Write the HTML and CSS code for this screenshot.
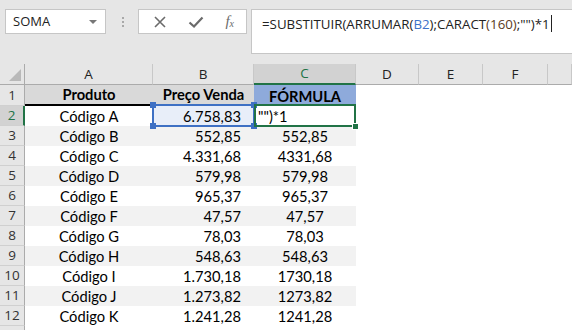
FILE: index.html
```html
<!DOCTYPE html>
<html>
<head>
  <meta charset="UTF-8">
  <title>Planilha – SUBSTITUIR</title>
  <link rel="stylesheet" href="styles.css">
</head>
<body>
  <!-- Formula bar -->
  <div class="formula-bar">
    <div class="name-box">SOMA<span class="drop"></span></div>
    <div class="grip"><i></i><i></i><i></i></div>
    <div class="fx-buttons">
      <svg width="14" height="14" viewBox="0 0 14 14"><path d="M2 2L12 12M12 2L2 12" stroke="#6b6b6b" stroke-width="1.6" fill="none"/></svg>
      <svg width="16" height="14" viewBox="0 0 16 14"><path d="M1.5 7.5L6 11.5L14.5 2.5" stroke="#6b6b6b" stroke-width="2.2" fill="none"/></svg>
      <span class="fx">f<sub>x</sub></span>
    </div>
    <div class="formula-input">=SUBSTITUIR(ARRUMAR(<span class="ref">B2</span>);CARACT<span class="par">(160)</span>;"")*1<span class="caret"></span></div>
  </div>

  <!-- Sheet -->
  <table class="sheet">
    <colgroup>
      <col style="width:25px"><col style="width:128px"><col style="width:101px"><col style="width:102px">
      <col style="width:63px"><col style="width:64px"><col style="width:65px"><col style="width:24px">
    </colgroup>
    <tr class="col-heads">
      <th class="corner"><span class="tri"></span></th><th>A</th><th>B</th><th class="on">C</th><th>D</th><th>E</th><th>F</th><th></th>
    </tr>
    <tr class="title-row">
      <th class="rh">1</th><td class="c">Produto</td><td class="c">Preço Venda</td><td class="c blue">FÓRMULA</td><td></td><td></td><td></td><td></td>
    </tr>
    <tr>
      <th class="rh on">2</th><td class="c">Código A</td><td class="r ref-cell">6.758,83</td><td class="active">"")*1</td><td></td><td></td><td></td><td></td>
    </tr>
    <tr class="alt">
      <th class="rh">3</th><td class="c">Código B</td><td class="r">552,85</td><td class="c">552,85</td><td></td><td></td><td></td><td></td>
    </tr>
    <tr>
      <th class="rh">4</th><td class="c">Código C</td><td class="r">4.331,68</td><td class="c">4331,68</td><td></td><td></td><td></td><td></td>
    </tr>
    <tr class="alt">
      <th class="rh">5</th><td class="c">Código D</td><td class="r">579,98</td><td class="c">579,98</td><td></td><td></td><td></td><td></td>
    </tr>
    <tr>
      <th class="rh">6</th><td class="c">Código E</td><td class="r">965,37</td><td class="c">965,37</td><td></td><td></td><td></td><td></td>
    </tr>
    <tr class="alt">
      <th class="rh">7</th><td class="c">Código F</td><td class="r">47,57</td><td class="c">47,57</td><td></td><td></td><td></td><td></td>
    </tr>
    <tr>
      <th class="rh">8</th><td class="c">Código G</td><td class="r">78,03</td><td class="c">78,03</td><td></td><td></td><td></td><td></td>
    </tr>
    <tr class="alt">
      <th class="rh">9</th><td class="c">Código H</td><td class="r">548,63</td><td class="c">548,63</td><td></td><td></td><td></td><td></td>
    </tr>
    <tr>
      <th class="rh">10</th><td class="c">Código I</td><td class="r">1.730,18</td><td class="c">1730,18</td><td></td><td></td><td></td><td></td>
    </tr>
    <tr class="alt">
      <th class="rh">11</th><td class="c">Código J</td><td class="r">1.273,82</td><td class="c">1273,82</td><td></td><td></td><td></td><td></td>
    </tr>
    <tr>
      <th class="rh">12</th><td class="c">Código K</td><td class="r">1.241,28</td><td class="c">1241,28</td><td></td><td></td><td></td><td></td>
    </tr>
    <tr>
      <th class="rh"></th><td></td><td></td><td></td><td></td><td></td><td></td><td></td>
    </tr>
  </table>
</body>
</html>
```

FILE: styles.css
```css
/* --- page --- */
body{margin:0;background:#fff;overflow:hidden;font-family:"Open Sans","Noto Sans",sans-serif;}

/* --- formula bar --- */
.formula-bar{display:flex;align-items:flex-start;height:64px;box-sizing:border-box;padding:9px 0 0 5px;background:#e6e6e6;}
.name-box{position:relative;width:101px;height:25px;box-sizing:border-box;border:1px solid #c6c6c6;background:#fff;
  font-size:13px;line-height:23px;padding-left:7px;color:#222;}
.name-box .drop{position:absolute;right:8px;top:10px;border-left:4px solid transparent;border-right:4px solid transparent;border-top:4px solid #777;}
.grip{display:flex;flex-direction:column;gap:2px;margin:8px 14px 0 16px;}
.grip i{display:block;width:2px;height:2px;background:#a8a8a8;}
.fx-buttons{display:flex;align-items:center;justify-content:space-between;width:109px;height:25px;box-sizing:border-box;
  border:1px solid #c6c6c6;background:#fff;padding:0 12px 0 14px;}
.fx{font-family:"Liberation Serif",serif;font-style:italic;font-size:15px;color:#6b6b6b;line-height:1;}
.fx sub{font-size:10px;vertical-align:-1px;}
.formula-input{flex:1;height:45px;margin-left:4px;box-sizing:border-box;border:1px solid #c6c6c6;border-right:none;background:#fff;
  padding:5px 0 0 10px;font-size:13.3px;color:#222;white-space:nowrap;}
.formula-input .ref{color:#3d72c9;}
.formula-input .par{color:#5a3a22;}
.caret{display:inline-block;width:1px;height:17px;background:#222;vertical-align:-3px;margin-left:1px;}

/* --- sheet --- */
.sheet{table-layout:fixed;border-collapse:separate;border-spacing:0;width:572px;font-family:Lato,"Carlito",sans-serif;font-size:14.7px;color:#000;}
.sheet td,.sheet th{height:20px;padding:0;box-sizing:border-box;white-space:nowrap;overflow:visible;}
.sheet td{line-height:19px;vertical-align:bottom;}
.col-heads th{height:21px;background:#e6e6e6;border-bottom:1px solid #ababab;border-right:1px solid #c8c8c8;
  font-family:"Open Sans","Noto Sans",sans-serif;font-weight:normal;font-size:13.5px;color:#222;line-height:19px;}
.col-heads th.on{background:#d2d2d2;color:#217346;border-bottom:2px solid #217346;}
.col-heads th.corner{position:relative;border-right:1px solid #ababab;}
.corner .tri{position:absolute;right:3px;bottom:3px;border-left:12px solid transparent;border-bottom:12px solid #b9b9b9;}
.rh{background:#e6e6e6;border-right:1px solid #ababab;border-bottom:1px solid #d0d0d0;
  font-family:"Open Sans","Noto Sans",sans-serif;font-weight:normal;font-size:13.5px;color:#333;line-height:19px;}
.rh.on{background:#d2d2d2;color:#217346;border-right:2px solid #217346;}

.c{text-align:center;}
.r{text-align:right;padding-right:13px !important;}
.alt td:nth-child(-n+4){background:#f2f2f2;}

.title-row td:nth-child(-n+3){background:#d9d9d9;}
.title-row td{font-weight:bold;}
.title-row td:nth-child(2),.title-row td:nth-child(3){border-bottom:2px solid #000;}
.title-row td.blue{background:#8eaadb;}

/* range reference (B2) */
.ref-cell{position:relative;background:#e8eef9;}
.ref-cell::before{content:"";position:absolute;left:-1px;top:-2px;right:-1px;bottom:-1px;border:2px solid #3e70c4;}
.ref-cell::after{content:"";position:absolute;left:-3px;top:-4px;width:6px;height:6px;background:#3e70c4;
  box-shadow:101px 0 0 #3e70c4,0 21px 0 #3e70c4,101px 21px 0 #3e70c4;}

/* active cell (C2) */
.active{position:relative;padding-left:4px !important;}
.active::before{content:"";position:absolute;left:0;top:-2px;right:0;bottom:-1px;border:2px solid #217346;}
.active::after{content:"";position:absolute;right:-3px;bottom:-4px;width:5px;height:5px;background:#217346;border:1px solid #fff;}
```
